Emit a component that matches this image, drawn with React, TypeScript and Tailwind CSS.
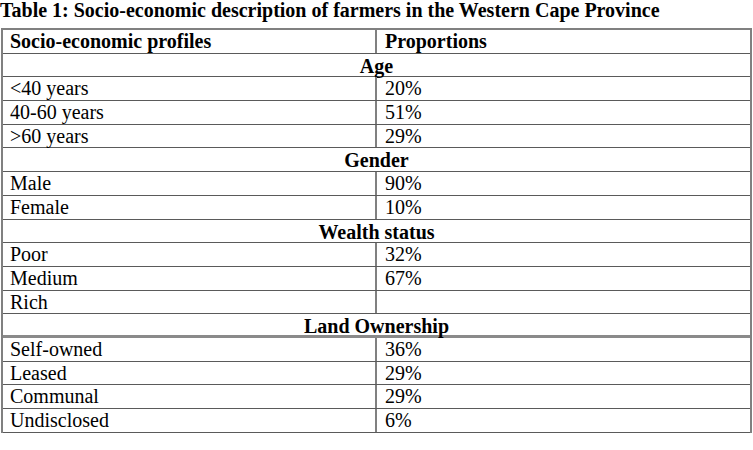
const sections = [
  {
    title: "Age",
    rows: [
      ["<40 years", "20%"],
      ["40-60 years", "51%"],
      [">60 years", "29%"],
    ],
  },
  {
    title: "Gender",
    rows: [
      ["Male", "90%"],
      ["Female", "10%"],
    ],
  },
  {
    title: "Wealth status",
    rows: [
      ["Poor", "32%"],
      ["Medium", "67%"],
      ["Rich", ""],
    ],
  },
  {
    title: "Land Ownership",
    rows: [
      ["Self-owned", "36%"],
      ["Leased", "29%"],
      ["Communal", "29%"],
      ["Undisclosed", "6%"],
    ],
  },
];

function Row({ left, right, bold }: { left: string; right: string; bold?: boolean }) {
  return (
    <div className={`flex h-[23.7px] border-b border-[#5a5a5a] ${bold ? "font-bold" : ""}`}>
      <div className="w-[374px] shrink-0 border-r-2 border-[#808080] pl-[7px] leading-[23px] whitespace-nowrap">{left}</div>
      <div className="flex-1 pl-[8px] leading-[23px] whitespace-nowrap">{right}</div>
    </div>
  );
}

export default function App() {
  return (
    <div
      className="w-[753px] h-[450px] bg-white text-black text-[20px] overflow-hidden"
      style={{ fontFamily: '"Liberation Serif", "Times New Roman", serif' }}
    >
      <div className="font-bold leading-[21px] whitespace-nowrap">
        Table 1: Socio-economic description of farmers in the Western Cape Province
      </div>
      <div className="mt-[7px] ml-px w-[751px] border-t-2 border-l-2 border-r-2 border-[#808080]">
        <Row left="Socio-economic profiles" right="Proportions" bold />
        {sections.map((s) => (
          <div key={s.title}>
            <div
              className={`h-[23.7px] text-center font-bold leading-[24px] ${
                s.title === "Land Ownership" ? "border-b-[3px] border-[#8a8a8a]" : "border-b border-[#5a5a5a]"
              }`}
            >
              {s.title}
            </div>
            {s.rows.map(([l, r]) => (
              <Row key={l} left={l} right={r} />
            ))}
          </div>
        ))}
      </div>
    </div>
  );
}
